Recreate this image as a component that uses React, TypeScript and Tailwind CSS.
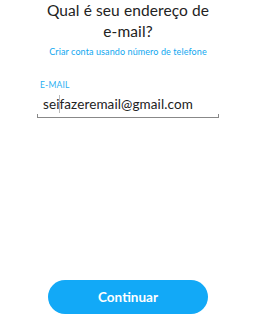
const App = () => {
    return (
        <div className="w-[256px] h-[320px] bg-white flex flex-col font-['Lato','Noto_Sans',sans-serif] text-[#222]">
            <div className="text-center">
                <h1 className="text-[15.5px] leading-[21px] tracking-[0.1px]">
                    Qual é seu endereço de
                    <br />
                    e-mail?
                </h1>
                <p className="mt-[4px] text-[9px] leading-[12px] tracking-[0.1px] text-[#10a7f0]">
                    Criar conta usando número de telefone
                </p>
            </div>
            <div className="mt-[22px] px-[37px]">
                <label className="block pl-[3px] text-[8.5px] leading-[10px] tracking-[0.2px] text-[#2aaff2]">
                    E-MAIL
                </label>
                <div className="relative mt-[5px] h-[23px] border-b border-[#888] pl-[6px]">
                    <span className="block text-[13.5px] leading-[18px] tracking-[0.1px]">
                        seifazeremail@gmail.com
                    </span>
                    <span className="absolute left-[22px] top-0 h-[18px] w-px bg-[#bbb]" />
                    <span className="absolute left-0 bottom-[-1px] h-[4px] w-px bg-[#888]" />
                    <span className="absolute right-0 bottom-[-1px] h-[4px] w-px bg-[#888]" />
                </div>
            </div>
            <div className="mt-auto mb-[6px] flex justify-center">
                <button className="w-[160px] h-[34px] rounded-full bg-[#12a9f7] text-white text-[13.5px] font-bold">
                    Continuar
                </button>
            </div>
        </div>
    );
};

export default App;
